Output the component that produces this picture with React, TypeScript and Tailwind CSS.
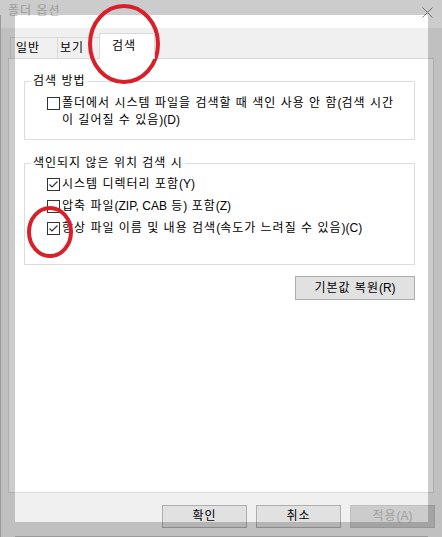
import React from "react";

// Hangul runs get a bit of letter spacing, latin runs stay tight
const T = ({ text }: { text: string }) => {
  const parts = text.split(/([\uAC00-\uD7A3 ]+)/).filter((p) => p !== "");
  return (
    <>
      {parts.map((p, i) =>
        /[\uAC00-\uD7A3]/.test(p) ? (
          <span key={i} className="tracking-[1px]">
            {p}
          </span>
        ) : (
          <span key={i}>{p}</span>
        )
      )}
    </>
  );
};

type CheckProps = {
  checked?: boolean;
};

const CheckBox = ({ checked }: CheckProps) => {
  return (
    <span className="w-[13px] h-[13px] shrink-0 border border-[#333333] bg-white flex items-center justify-center">
      {checked && (
        <svg width="11" height="11" viewBox="0 0 11 11">
          <polyline
            points="1.5,5.5 4,8 9.5,2.5"
            fill="none"
            stroke="#333333"
            strokeWidth="1.2"
          />
        </svg>
      )}
    </span>
  );
};

const Row = ({ checked, label }: { checked?: boolean; label: string }) => {
  return (
    <div className="h-[22px] flex items-center gap-[2px] pl-[22px]">
      <CheckBox checked={checked} />
      <span className="whitespace-nowrap">
        <T text={label} />
      </span>
    </div>
  );
};

const App = () => {
  return (
    <div className="relative w-[442px] h-[537px] overflow-hidden bg-[#f0f0f0] text-[12px] leading-[17px] text-black font-['Liberation_Sans','Noto_Sans_CJK_KR',sans-serif]">
      {/* title bar */}
      <div className="h-[28px] bg-white flex items-start justify-between pl-[8px] pr-[9px] pt-[3px]">
        <span className="text-[#c4c4c4] text-[12px] leading-[17px] tracking-[1px]">폴더 옵션</span>
        <svg width="11" height="11" viewBox="0 0 11 11" className="mt-[4px]">
          <path d="M0.5 0.5 L10.5 10.5 M10.5 0.5 L0.5 10.5" stroke="#8a8a8a" strokeWidth="1" />
        </svg>
      </div>

      {/* tabs */}
      <div className="h-[30px] flex items-end pl-[10px] tracking-[1px]">
        <div className="w-[47px] h-[21px] pl-[5px] flex items-center border border-b-0 border-[#d9d9d9] border-r-0">
          일반
        </div>
        <div className="w-[44px] h-[21px] pl-[2px] flex items-center border border-b-0 border-[#d9d9d9]">
          보기
        </div>
        <div className="relative z-10 -ml-[2px] -mb-px w-[56px] h-[26px] pl-[12px] flex items-center bg-white border border-b-0 border-[#d9d9d9]">
          검색
        </div>
      </div>

      {/* panel */}
      <div className="mx-[8px] h-[435px] bg-white border border-[#d9d9d9] pl-[15px] pr-[18px] pt-[14px]">
        <fieldset className="border border-[#dcdcdc] pb-[10px]">
          <legend className="ml-[6px] px-[2px] tracking-[1px]">검색 방법</legend>
          <div className="flex items-start gap-[2px] pl-[22px] pt-[5px]">
            <span className="mt-[2px]">
              <CheckBox />
            </span>
            <span className="whitespace-nowrap">
              <T text="폴더에서 시스템 파일을 검색할 때 색인 사용 안 함(검색 시간" />
              <br />
              <T text="이 길어질 수 있음)(D)" />
            </span>
          </div>
        </fieldset>

        <fieldset className="mt-[15px] border border-[#dcdcdc] pb-[25px]">
          <legend className="ml-[6px] px-[2px] tracking-[1px]">색인되지 않은 위치 검색 시</legend>
          <div className="pt-[1px]">
            <Row checked label="시스템 디렉터리 포함(Y)" />
            <Row label="압축 파일(ZIP, CAB 등) 포함(Z)" />
            <Row checked label="항상 파일 이름 및 내용 검색(속도가 느려질 수 있음)(C)" />
          </div>
        </fieldset>

        <div className="flex justify-end mt-[11px]">
          <button className="w-[120px] h-[24px] bg-[#e1e1e1] border border-[#adadad]">
            <T text="기본값 복원(R)" />
          </button>
        </div>
      </div>

      {/* dialog buttons */}
      <div className="flex justify-end gap-[9px] pr-[7px] mt-[12px]">
        <button className="w-[85px] h-[23px] bg-[#e1e1e1] border border-[#adadad] tracking-[1px]">확인</button>
        <button className="w-[85px] h-[23px] bg-[#e1e1e1] border border-[#adadad] tracking-[1px]">취소</button>
        <button className="w-[85px] h-[23px] bg-[#cccccc] border border-[#bfbfbf] text-[#a0a0a0]">
          <T text="적용(A)" />
        </button>
      </div>

      {/* darkened frame over the edges */}
      <div className="absolute left-0 top-0 w-[442px] h-[15px] bg-black/20" />
      <div className="absolute left-0 top-[15px] w-[15px] h-[522px] bg-black/20 border-l border-[#9a9a9a]" />
      <div className="absolute left-[428px] top-[15px] w-[14px] h-[522px] bg-black/20" />
      <div className="absolute left-[15px] top-[522px] w-[413px] h-[15px] bg-black/20 border-b border-[#9a9a9a]" />

      {/* red annotation circles */}
      <svg className="absolute left-0 top-0 pointer-events-none" width="442" height="537">
        <ellipse cx="124" cy="44" rx="34" ry="38" fill="none" stroke="#d8202a" strokeWidth="4" />
        <ellipse cx="50" cy="232" rx="21" ry="24" fill="none" stroke="#d8202a" strokeWidth="4" />
      </svg>
    </div>
  );
};

export default App;
